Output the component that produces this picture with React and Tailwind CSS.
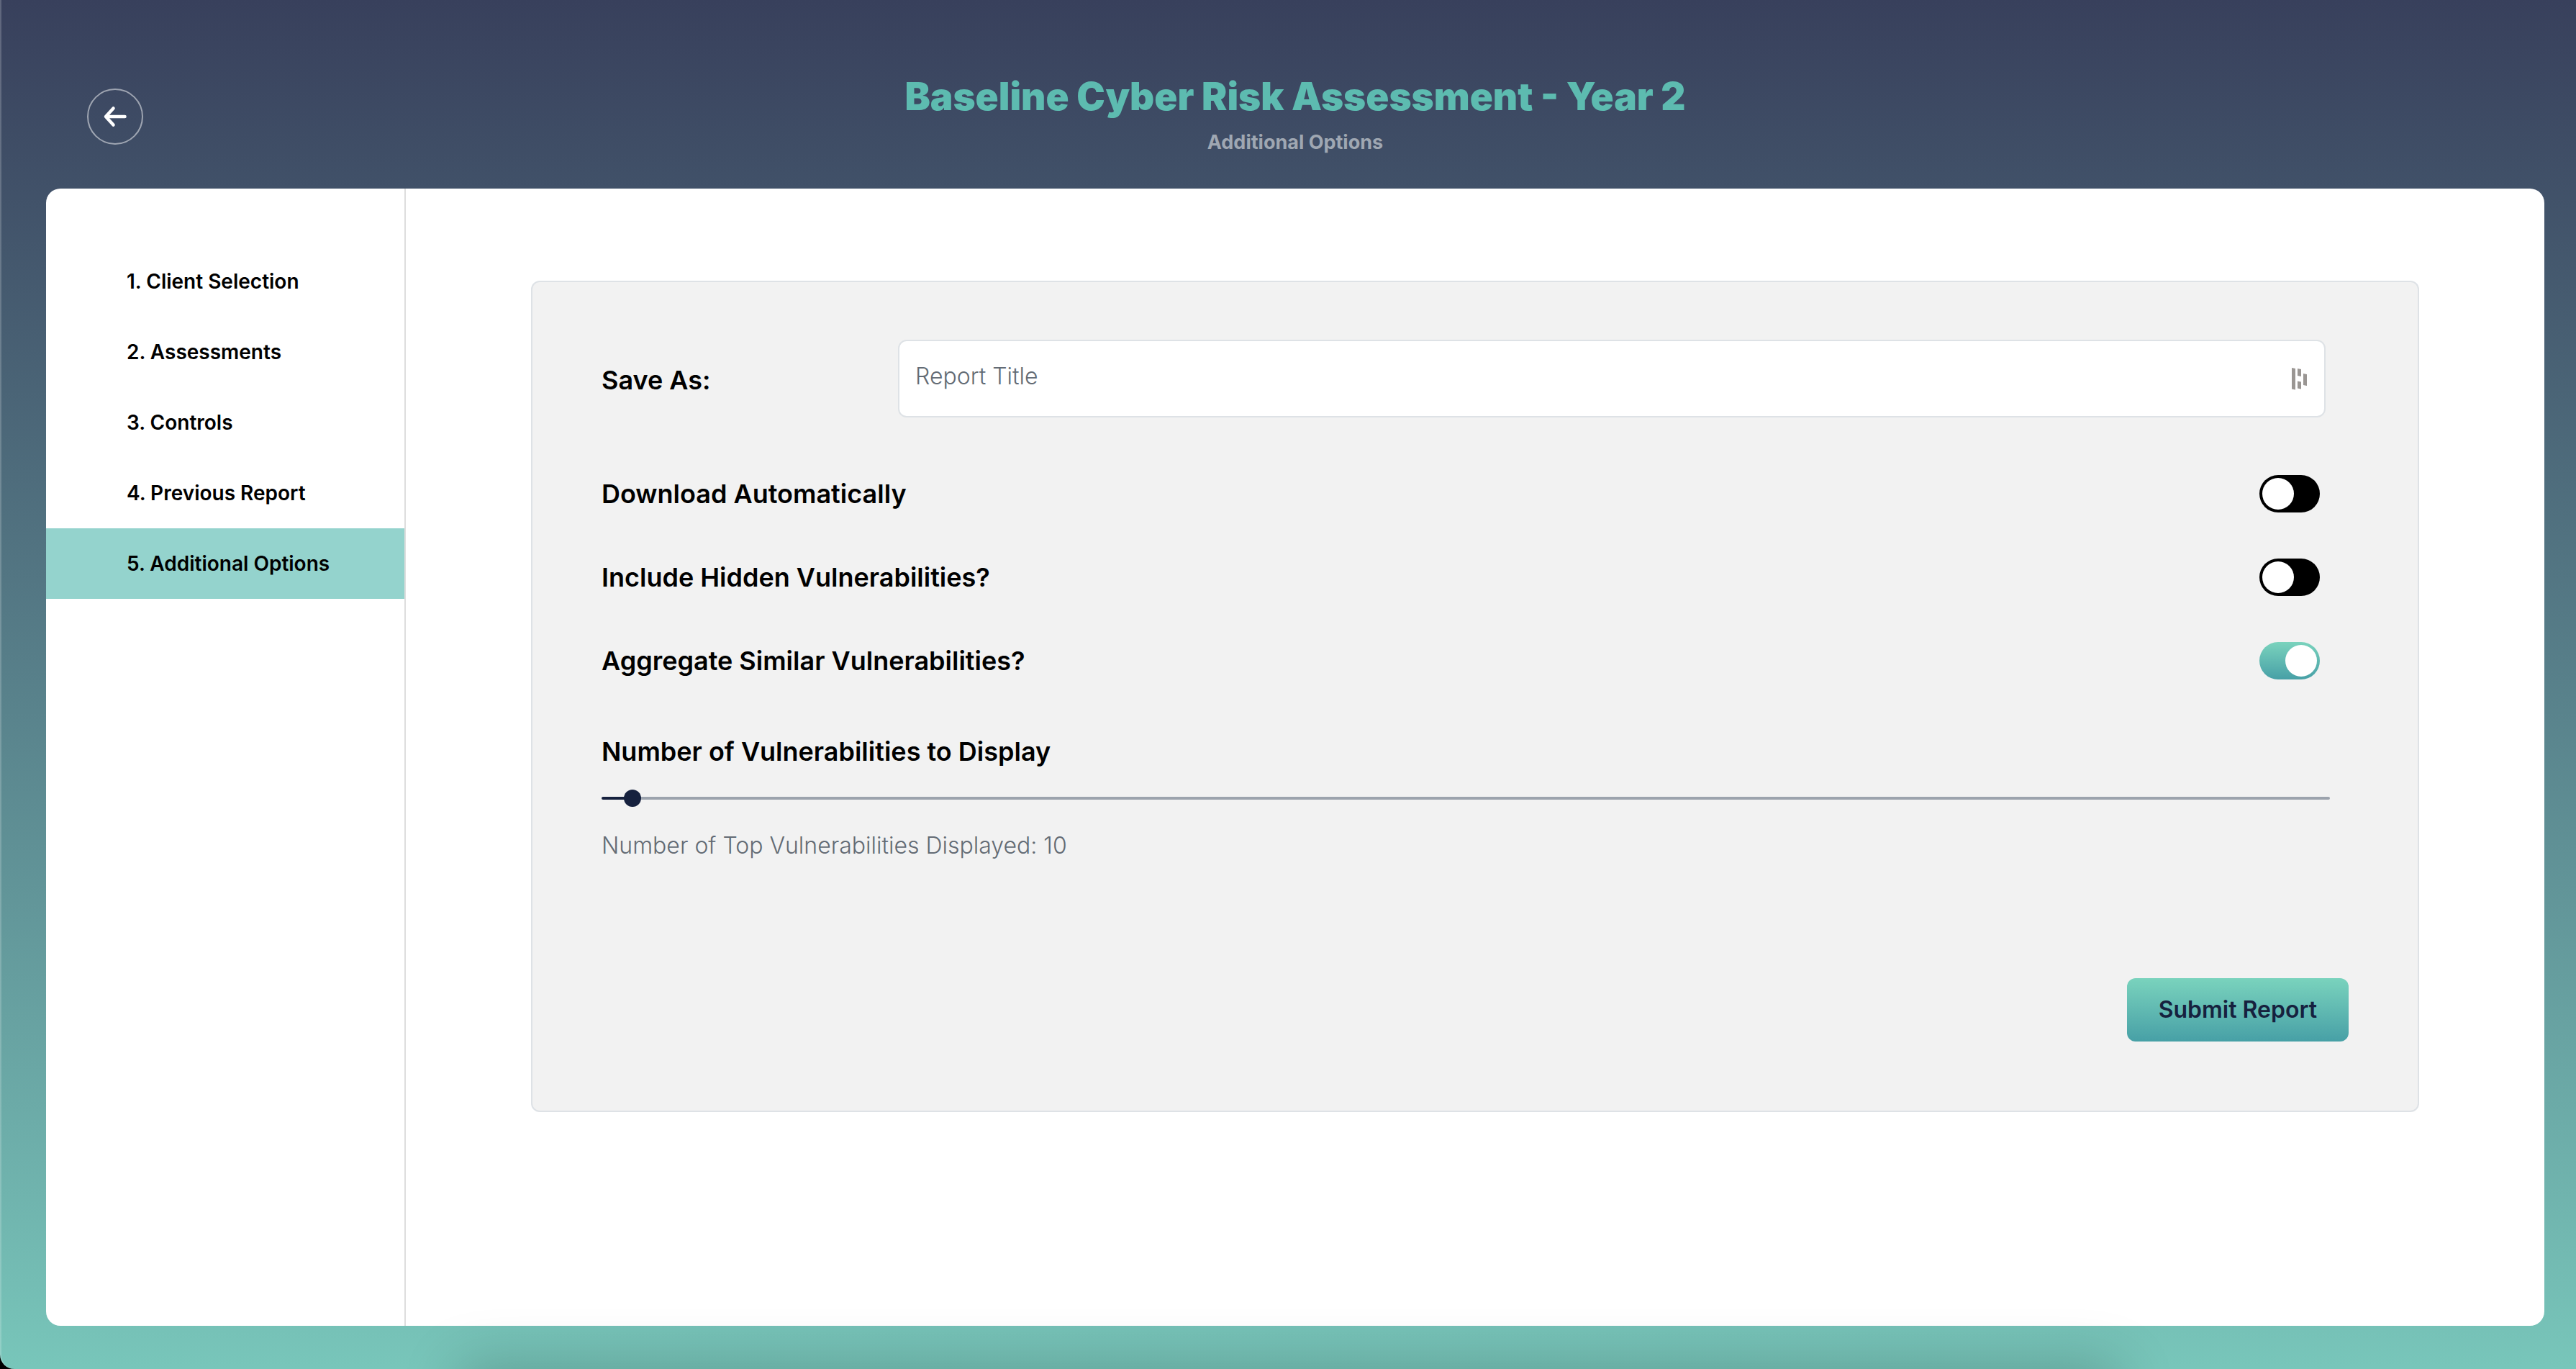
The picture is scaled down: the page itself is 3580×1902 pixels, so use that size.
import { useId, useState } from "react";

const STEPS = [
  "1. Client Selection",
  "2. Assessments",
  "3. Controls",
  "4. Previous Report",
  "5. Additional Options",
];

const MIN_COUNT = 1;
const MAX_COUNT = 700;

function BackArrow() {
  return (
    <svg width="34" height="32" viewBox="0 0 34 32" fill="none" stroke="white" strokeWidth="4.500" strokeLinecap="round" strokeLinejoin="round" aria-hidden="true">
      <path d="M14.500 4.500 4 16 14.500 27.500M4.500 16h26" />
    </svg>
  );
}

function BarsIcon() {
  return (
    <svg className="shrink-0" width="21" height="31" viewBox="0 0 21 31" fill="#9a9693" aria-hidden="true">
      <path d="M0 0l5 1v29.500l-5-1z" />
      <path d="M8 1l5 1v10l-5-1z" />
      <path d="M8 18.500l5 1v10l-5-1z" />
      <path d="M16 8l5 1v16l-5-1z" />
    </svg>
  );
}

function ToggleRow({ label, initial }) {
  const id = useId();
  const [on, setOn] = useState(initial);
  return (
    <div className="flex h-[116px] items-center justify-between pr-10">
      <label htmlFor={id} className="text-[36px] leading-10 font-semibold">
        {label}
      </label>
      <input
        id={id}
        type="checkbox"
        role="switch"
        checked={on}
        onChange={(e) => setOn(e.target.checked)}
        className="flex h-[52px] w-[84px] shrink-0 cursor-pointer appearance-none rounded-full bg-black p-1 before:block before:size-11 before:rounded-full before:bg-white before:content-[''] checked:justify-end checked:bg-linear-to-b checked:from-[#7ad3bd] checked:to-[#47a0a6]"
      />
    </div>
  );
}

function CountSlider() {
  const id = useId();
  const [count, setCount] = useState(10);
  const percent = ((count - MIN_COUNT) / (MAX_COUNT - MIN_COUNT)) * 100;
  return (
    <div className="mt-12 flex flex-col pr-[26px]">
      <label htmlFor={id} className="text-[36px] leading-10 font-semibold">
        Number of Vulnerabilities to Display
      </label>
      <div className="mt-[33px] flex h-6 items-center">
        <input
          id={id}
          type="range"
          min={MIN_COUNT}
          max={MAX_COUNT}
          value={count}
          onChange={(e) => setCount(Number(e.target.value))}
          style={{
            backgroundImage: `linear-gradient(to right, #16213e calc(${percent}% + 12px), #9ca3ad calc(${percent}% + 12px))`,
          }}
          className="h-1 w-full cursor-pointer appearance-none rounded-full [&::-webkit-slider-thumb]:size-6 [&::-webkit-slider-thumb]:appearance-none [&::-webkit-slider-thumb]:rounded-full [&::-webkit-slider-thumb]:bg-[#16213e]"
        />
      </div>
      <p className="mt-[34px] text-[32px] leading-10 font-light text-[#636b74]">
        Number of Top Vulnerabilities Displayed: {count}
      </p>
    </div>
  );
}

export default function App() {
  return (
    <div className="bg-black font-['Inter',sans-serif] text-black">
      <div className="relative flex min-h-screen flex-col overflow-hidden rounded-bl-[20px] border-l-2 border-white/20 bg-linear-to-b from-[#38405c] to-[#78c6ba] bg-origin-border pr-11 pb-[60px] pl-[62px]">
        <header className="grid grid-cols-[1fr_auto_1fr] items-start pb-11">
          <button
            type="button"
            aria-label="Back"
            className="mt-[123px] ml-[57px] flex size-[78px] items-center justify-center rounded-full border-2 border-white/50"
          >
            <BackArrow />
          </button>
          <div className="pt-[102px] text-center">
            <h1 className="text-[53px] leading-16 font-black text-[#5dbbb0]">
              Baseline Cyber Risk Assessment - Year 2
            </h1>
            <p className="mt-3 text-[27px] leading-10 font-bold text-[#9fa7b2]">
              Additional Options
            </p>
          </div>
        </header>

        <div className="flex grow overflow-hidden rounded-[20px] bg-white">
          <nav aria-label="Report steps" className="w-[500px] shrink-0 border-r-2 border-[#dddddd] pt-20">
            <ol>
              {STEPS.map((step, i) => (
                <li key={step}>
                  <a
                    href="#"
                    aria-current={i === 4 ? "step" : undefined}
                    className={
                      i === 4
                        ? "flex h-[98px] items-center bg-[#94d3cd] pl-28 text-[28px] font-semibold"
                        : "flex h-[98px] items-center pl-28 text-[28px] font-semibold"
                    }
                  >
                    {step}
                  </a>
                </li>
              ))}
            </ol>
          </nav>

          <main className="grow px-[174px] pt-32 pb-32">
            <form
              onSubmit={(e) => e.preventDefault()}
              className="flex flex-col rounded-xl border-2 border-[#dee2e6] bg-[#f2f2f2] px-24 pt-20 pb-24"
            >
              <div className="mb-12 flex items-center pr-8">
                <label htmlFor="report-title" className="w-[412px] shrink-0 pt-1 text-[36px] leading-10 font-semibold">
                  Save As:
                </label>
                <div className="flex h-[108px] grow items-center rounded-xl border-2 border-[#dee2e6] bg-white pr-6 pl-[22px]">
                  <input
                    id="report-title"
                    type="text"
                    placeholder="Report Title"
                    className="h-full grow pb-2 text-[32px] font-light outline-none placeholder:text-[#636b74]"
                  />
                  <BarsIcon />
                </div>
              </div>

              <ToggleRow label="Download Automatically" initial={false} />
              <ToggleRow label="Include Hidden Vulnerabilities?" initial={false} />
              <ToggleRow label="Aggregate Similar Vulnerabilities?" initial={true} />

              <CountSlider />

              <button
                type="submit"
                className="mt-[164px] h-[88px] self-end rounded-xl bg-linear-to-b from-[#7ad3bd] to-[#47a0a6] px-11 text-[32px] font-semibold text-[#16213e]"
              >
                Submit Report
              </button>
            </form>
          </main>
        </div>

        <div
          aria-hidden="true"
          className="pointer-events-none absolute inset-x-[640px] top-full h-20 shadow-[0_0_80px_4px_rgba(0,0,0,0.22)]"
        />
      </div>
    </div>
  );
}
